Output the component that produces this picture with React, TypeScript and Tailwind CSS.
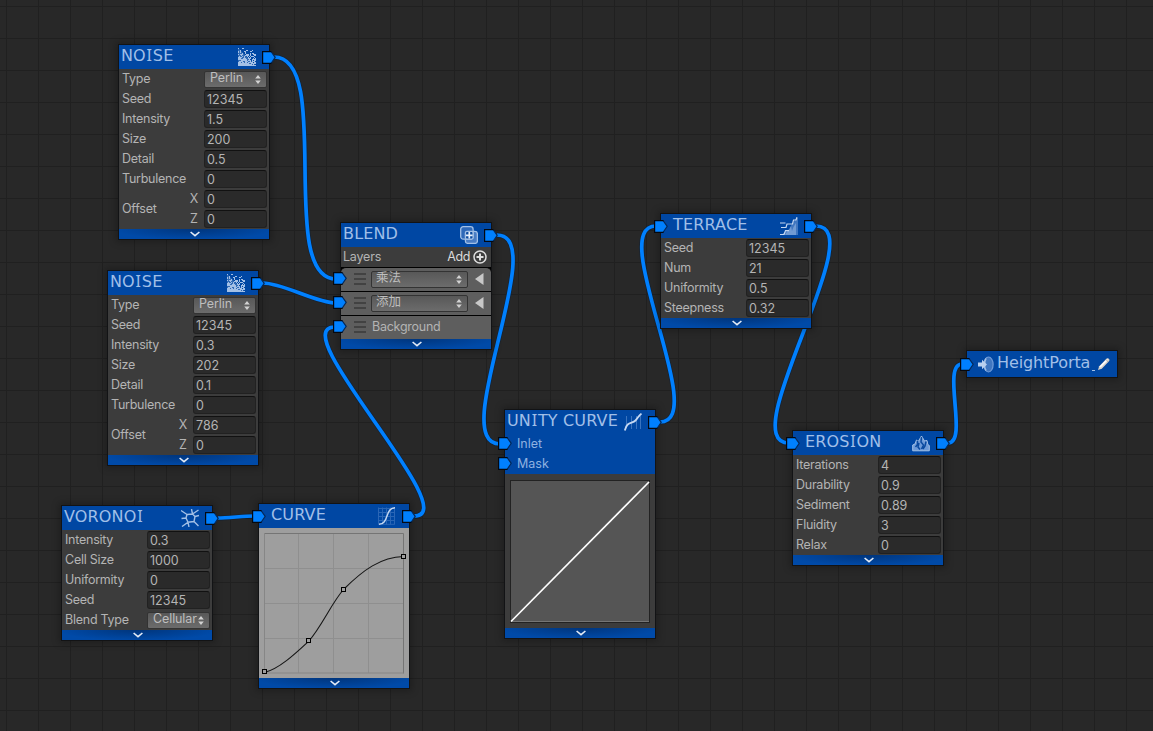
import type { ReactNode } from 'react';
import { Fragment } from 'react';
import clsx from 'clsx';

type Row = { label: string; value: string; kind?: 'select' };

const INK = '#a3c0e6';

const wires = [
  [274, 57, 336, 279],
  [263, 283, 336, 303],
  [218, 518, 254, 516],
  [414, 516, 335, 327],
  [497, 235, 500, 444],
  [660, 422, 656, 226],
  [816, 226, 789, 443],
  [948, 443, 962, 364],
];

function wirePath([x1, y1, x2, y2]: number[]) {
  const k = Math.hypot(x2 - x1, y2 - y1) * 0.26;
  return `M${x1} ${y1}C${x1 + k} ${y1} ${x2 - k} ${y2} ${x2} ${y2}`;
}

function Wires() {
  return (
    <svg className="absolute inset-0" width="1153" height="731" fill="none">
      {wires.map((w, i) => (
        <g key={i}>
          <path d={wirePath(w)} stroke="#0b1f38" strokeOpacity="0.6" strokeWidth="5.2" />
          <path d={wirePath(w)} stroke="#0080ff" strokeWidth="3.7" />
        </g>
      ))}
    </svg>
  );
}

function Port({ className }: { className: string }) {
  return (
    <svg className={clsx('absolute', className)} width="14" height="13" viewBox="0 0 14 13">
      <path d="M.5.5H9L13.2 6.3 9 12.5H.5z" fill="#0080ff" />
      <path d="M9 .5L13.2 6.3 9 12.5" fill="none" stroke="#04295a" strokeWidth="1.2" />
      <path d="M9.5.6H.6V12.4H9.5" fill="none" stroke="#05080f" strokeWidth="1.2" />
    </svg>
  );
}

function Title({ text }: { text: string }) {
  return (
    <span className="font-['DejaVu_Sans',sans-serif] text-[16px] leading-[20px] tracking-[0.15px] text-[#a0bfe8] whitespace-pre">
      {text.split('I').map((part, i) => (
        <Fragment key={i}>
          {i > 0 && <span className="font-['Noto_Sans',sans-serif] px-[0.7px] leading-none">I</span>}
          {part}
        </Fragment>
      ))}
    </span>
  );
}

function NoiseIcon() {
  const dots: ReactNode[] = [];
  let seed = 4321;
  for (let y = 0; y < 18; y++) {
    for (let x = 0; x < 18; x++) {
      seed = (seed * 16807) % 2147483647;
      const r = seed / 2147483647;
      const density = 0.3 + (y - x) * 0.022 + y * 0.027;
      if (r < density) dots.push(<rect key={`${x}-${y}`} x={x} y={y} width="1" height="1" />);
    }
  }
  return (
    <svg width="18" height="18" fill={INK}>
      <path d="M0 0v18h18z" fillOpacity=".3" />
      {dots}
    </svg>
  );
}

function BlendIcon() {
  return (
    <svg width="18" height="18" fill="none" stroke={INK} strokeWidth="1.3">
      <rect x="5.4" y="5.4" width="12" height="12" rx="2.5" fill="#4a7dc4" />
      <rect x=".7" y=".7" width="12.4" height="12.4" rx="2.5" fill="#2f69b8" />
      <rect x="5.4" y="5.4" width="7.7" height="7.7" rx="1.5" fill="#0a4aa0" />
      <path d="M9.3 6v6.600M6 9.300h6.600" stroke="#e6effb" strokeWidth="1.7" />
    </svg>
  );
}

function VoronoiIcon() {
  return (
    <svg width="18" height="18" fill="none" stroke={INK} strokeWidth="1.4">
      <path d="M6 5.500l5.500-.5L14 7.500l-1 5-6 .8L5 9zM0 1.500L6 5.500M10.500 0l1 5M11.500 5L17.500 1M14 7.500l4-1M13 12.500l4.500 4.500M7 13.300l1 4.700M7 13.300L1 17.500M5 9L.500 9.500" />
    </svg>
  );
}

function CurveIcon() {
  return (
    <svg width="18" height="18" fill="none">
      <path
        d="M.5 1.500h16M.5 5.500h16M.5 9.500h16M.5 13.500h16M.5 17.300h16M.5.5v17M4.500.5v17M8.500.5v17M12.500.5v17M16.500.5v17"
        stroke="#2a66b6"
      />
      <path d="M1 17.300c10 0 6-16.600 16-16.600" stroke="#c5d8f2" strokeWidth="1.4" />
    </svg>
  );
}

function UnityCurveIcon() {
  return (
    <svg width="18" height="18" fill="none">
      <path d="M2.500 3v11M7.500 3v13M12.500 3v13M16.500 3v13" stroke="#3a73be" />
      <path d="M.8 17.500C3 8 8 11 11.500 7.500 14 5 15 2 17.500.7" stroke="#c5d8f2" strokeWidth="1.8" />
    </svg>
  );
}

function TerraceIcon() {
  return (
    <svg width="18" height="18" fill="none">
      <path d="M2 17.500l4.500-4 3-1 1.500-4 3-4L16.500.7 18 1v17H2z" fill="#3f76c0" />
      <path d="M5 18c1-3 4-5 6-9l1 5 1.500-4L16 6v12z" fill="#a3c0e6" fillOpacity=".5" />
      <path d="M0 17.500h4l1.500-3.800H9M0 6h5.500M1 10.500h5l1-3.500h5.500l1-4H16l1-2.800" stroke="#c5d8f2" strokeWidth="1.2" />
    </svg>
  );
}

function ErosionIcon() {
  return (
    <svg width="18" height="18" fill="none">
      <path d="M.7 16.800V11l2.300-1L4.500 6l2 1L9.500 2l3 5L15 6.500l.8 4 1.500 1v5.300z" fill="#6d9ad8" stroke={INK} strokeWidth="1" />
      <path d="M5.500 6.500v4L3.500 13M9.500 3L9 8l2.500 3-2 4M14 7.500L13 12l-2 3M7 9l-1 4 2 2.500" stroke="#0a4aa0" strokeWidth="1.500" />
    </svg>
  );
}

function PencilIcon() {
  return (
    <svg width="14" height="14" fill="none">
      <path d="M1 13l1.200-3.800L9.700 1.600c1.300-1.200 3.700.9 2.500 2.500L4.800 11.700z" fill="#d8d3cc" />
      <path d="M3 10L10.500 2.500" stroke="#fff" strokeWidth="1.600" />
      <path d="M8.800 2.400l2.700 2.700" stroke="#9c948c" strokeWidth=".8" />
    </svg>
  );
}

function SelectArrows() {
  return (
    <svg width="6" height="9" viewBox="0 0 6 9" className="shrink-0">
      <path d="M3 0l2.800 3.600H.2zM3 9L.2 5.400h5.600z" fill="#d2d2d2" />
    </svg>
  );
}

function Select({ value, className }: { value: string; className: string }) {
  return (
    <div
      className={clsx(
        'flex items-center justify-between rounded-[2px] border border-[#333] bg-linear-to-b from-[#585858] to-[#6c6c6c] pr-[5px]',
        className,
      )}
    >
      <span className="-mt-[4px] leading-[15px] tracking-[-0.1px] text-[#bebebe]">{value}</span>
      <SelectArrows />
    </div>
  );
}

function Field({ value }: { value: string }) {
  return (
    <div className="my-px h-[18px] w-[63px] rounded-[3px] border border-[#212121] border-t-[#111] bg-[#2a2a2a] pl-[2px] leading-[18px]">
      {value}
    </div>
  );
}

function Rows({ rows }: { rows: Row[] }) {
  return rows.map((row) => (
    <div key={row.label} className="flex h-5 justify-between pl-[3px] pr-[2px]">
      <span className="leading-5 tracking-[-0.25px]">{row.label}</span>
      {row.kind === 'select' ? (
        <Select value={row.value} className="mt-[2px] h-[17px] w-[63px] pl-[5px]" />
      ) : (
        <Field value={row.value} />
      )}
    </div>
  ));
}

function Footer() {
  return (
    <div className="flex h-[10px] items-start justify-center bg-[#004aa8] bg-[radial-gradient(ellipse_at_center_top,#00357c,#004aa8_75%)] pl-px pt-[2px]">
      <svg width="10" height="6" viewBox="0 0 10 6" fill="none">
        <path d="M.6 1L5 4.600 9.400 1" stroke="#e4ecf7" strokeWidth="1.6" />
      </svg>
    </div>
  );
}

type NodeProps = {
  title: string;
  place: string;
  icon: ReactNode;
  inlet?: boolean;
  sockets?: string[];
  children: ReactNode;
};

function Node({ title, place, icon, inlet, sockets, children }: NodeProps) {
  return (
    <div
      className={clsx(
        'absolute w-[150px] bg-[#3c3c3c] shadow-[0_0_0_1px_#121315,0_0_7px_3px_rgba(0,0,0,0.25)]',
        place,
      )}
    >
      <div className="bg-[#0047a3]">
        <div className={clsx('flex h-6 items-start justify-between pr-[13px] pt-px', inlet ? 'pl-[12px]' : 'pl-[2px]')}>
          <Title text={title} />
          <div className="mt-[2px] -ml-2 shrink-0">{icon}</div>
        </div>
        {sockets?.map((name) => (
          <div key={name} className="relative h-5 pl-[12px] leading-5 text-[#8fb2e0]">
            <Port className="-left-[7px] top-[3px]" />
            {name}
          </div>
        ))}
      </div>
      {inlet && <Port className="-left-[7px] top-[6px]" />}
      <Port className="left-[143px] top-[6px]" />
      {children}
      <Footer />
    </div>
  );
}

function NoiseNode({ place, rows, offset }: { place: string; rows: Row[]; offset: [string, string] }) {
  return (
    <Node title="NOISE" place={place} icon={<NoiseIcon />}>
      <Rows rows={rows} />
      <div className="flex h-10 items-center pl-[3px] pr-[2px]">
        <span className="flex-1 tracking-[-0.25px]">Offset</span>
        <div className="mr-[5px] flex w-[10px] flex-col items-center">
          <span className="h-5 leading-5">X</span>
          <span className="h-5 leading-5">Z</span>
        </div>
        <div className="flex flex-col">
          <Field value={offset[0]} />
          <Field value={offset[1]} />
        </div>
      </div>
    </Node>
  );
}

function Layer({ mode, label }: { mode?: string; label?: string }) {
  return (
    <div className="relative flex h-6 items-center border-t border-black bg-[#5e5e5e] pl-[13px] pr-[7px] first:rounded-t-[5px]">
      <Port className="-left-[8px] top-[4px]" />
      <svg width="13" height="12" className="-mt-px mr-[4px]" fill="none">
        <path d="M0 1h12M0 6h12M0 11h12" stroke="#3a3a3a" strokeWidth="1.4" />
      </svg>
      {mode ? (
        <>
          <Select value={mode} className="-mt-px h-[17px] w-[97px] pl-[4px]" />
          <svg width="9" height="12" className="-mt-px ml-auto">
            <path d="M8.500 0v12L0 6z" fill="#c8c8c8" />
          </svg>
        </>
      ) : (
        <span className="ml-px tracking-[-0.25px]">{label}</span>
      )}
    </div>
  );
}

function PortalNode() {
  return (
    <div className="absolute left-[967px] top-[351px] flex h-[26px] w-[150px] items-start bg-[#0047a3] pl-[11px] shadow-[0_0_0_1px_#121315,0_0_7px_3px_rgba(0,0,0,0.25)]">
      <Port className="-left-[7px] top-[7px]" />
      <svg width="16" height="17" className="mt-[5px] mr-[3px] shrink-0" fill="none">
        <ellipse cx="10.500" cy="8.500" rx="4.600" ry="7.500" fill="#3f76c0" stroke="#6f9bd8" strokeWidth="1.200" />
        <path d="M8 2.500c-2 3-2 9 0 12" stroke="#a3c0e6" strokeWidth="1.500" />
        <path d="M0 6.500h4V3.800L9 8.500l-5 4.700v-2.700H0z" fill="#b9d0ef" />
      </svg>
      <div className="mt-[2px] flex w-[100px] shrink-0 overflow-hidden">
        <span className="mr-[2px] font-['DejaVu_Sans',sans-serif] text-[16px] leading-[20px] tracking-[-0.1px] text-[#a0bfe8]">
          HeightPorta
        </span>
        <span className="-mt-px h-[19px] w-[3px] border-b border-[#a3c0e6]" />
      </div>
      <div className="mt-[6px]">
        <PencilIcon />
      </div>
    </div>
  );
}

function CurveGraph() {
  const points = [[5.5, 143.5], [49.5, 112.5], [84.5, 61.5], [144.5, 28.5]];
  return (
    <svg width="150" height="150" className="block bg-[#9e9e9e]" fill="none">
      <path d="M39.500 5v140M74.500 5v140M109.500 5v140M5 40.500h140M5 75.500h140M5 110.500h140" stroke="#8f8f8f" />
      <path d="M5 5.500h139.500v140" stroke="#757575" />
      <path d="M5.500 5v140h139" stroke="#868686" />
      <path
        d="M5.500 144.500C20 141 36 126 49.500 113.500 63 98 72 76 84.500 61.500 104 42 122 29 144.500 28.500"
        stroke="#161616"
        strokeWidth="1.100"
      />
      {points.map(([x, y]) => (
        <rect key={x} x={x - 2} y={y - 2} width="4" height="4" fill="#9e9e9e" stroke="#000" />
      ))}
    </svg>
  );
}

export default function App() {
  return (
    <div className="relative h-[731px] w-[1153px] overflow-hidden bg-[#282828] bg-[linear-gradient(#202020_1px,transparent_1px),linear-gradient(90deg,#202020_1px,transparent_1px)] bg-[size:32px_32px] bg-[position:6px_6px] font-[Inter,'Noto_Sans_CJK_SC',sans-serif] text-[12.5px] text-[#b4b4b4]">
      <Wires />

      <NoiseNode
        place="left-[119px] top-[45px]"
        rows={[
          { label: 'Type', value: 'Perlin', kind: 'select' },
          { label: 'Seed', value: '12345' },
          { label: 'Intensity', value: '1.5' },
          { label: 'Size', value: '200' },
          { label: 'Detail', value: '0.5' },
          { label: 'Turbulence', value: '0' },
        ]}
        offset={['0', '0']}
      />
      <NoiseNode
        place="left-[108px] top-[271px]"
        rows={[
          { label: 'Type', value: 'Perlin', kind: 'select' },
          { label: 'Seed', value: '12345' },
          { label: 'Intensity', value: '0.3' },
          { label: 'Size', value: '202' },
          { label: 'Detail', value: '0.1' },
          { label: 'Turbulence', value: '0' },
        ]}
        offset={['786', '0']}
      />

      <Node title="VORONOI" place="left-[62px] top-[506px]" icon={<VoronoiIcon />}>
        <Rows
          rows={[
            { label: 'Intensity', value: '0.3' },
            { label: 'Cell Size', value: '1000' },
            { label: 'Uniformity', value: '0' },
            { label: 'Seed', value: '12345' },
            { label: 'Blend Type', value: 'Cellular', kind: 'select' },
          ]}
        />
      </Node>

      <Node title="CURVE" place="left-[259px] top-[504px]" icon={<CurveIcon />} inlet>
        <CurveGraph />
      </Node>

      <Node title="BLEND" place="left-[341px] top-[223px]" icon={<BlendIcon />}>
        <div className="flex h-5 items-center pl-[2px] pr-[4px]">
          <span className="tracking-[-0.2px]">Layers</span>
          <span className="ml-auto mr-[3px] tracking-[-0.4px] text-[#dadada]">Add</span>
          <svg width="14" height="14" fill="none" stroke="#dedede">
            <circle cx="7" cy="7" r="6" strokeWidth="1.500" />
            <path d="M7 3.500v7M3.500 7h7" strokeWidth="2" />
          </svg>
        </div>
        <div className="bg-black">
          <Layer mode="乘法" />
          <Layer mode="添加" />
          <Layer label="Background" />
        </div>
      </Node>

      <Node title="UNITY CURVE" place="left-[505px] top-[410px]" icon={<UnityCurveIcon />} sockets={['Inlet', 'Mask']}>
        <div className="h-[154px] px-[5px] pt-[6px]">
          <svg width="140" height="143" className="block" fill="none">
            <rect x=".5" y=".5" width="139" height="142" fill="#555" stroke="#222" />
            <path d="M1 141.500h138" stroke="#757575" />
            <path d="M1 141.500L139 2" stroke="#fff" strokeWidth="1.700" />
          </svg>
        </div>
      </Node>

      <Node title="TERRACE" place="left-[661px] top-[214px]" icon={<TerraceIcon />} inlet>
        <Rows
          rows={[
            { label: 'Seed', value: '12345' },
            { label: 'Num', value: '21' },
            { label: 'Uniformity', value: '0.5' },
            { label: 'Steepness', value: '0.32' },
          ]}
        />
      </Node>

      <Node title="EROSION" place="left-[793px] top-[431px]" icon={<ErosionIcon />} inlet>
        <Rows
          rows={[
            { label: 'Iterations', value: '4' },
            { label: 'Durability', value: '0.9' },
            { label: 'Sediment', value: '0.89' },
            { label: 'Fluidity', value: '3' },
            { label: 'Relax', value: '0' },
          ]}
        />
      </Node>

      <PortalNode />
    </div>
  );
}
